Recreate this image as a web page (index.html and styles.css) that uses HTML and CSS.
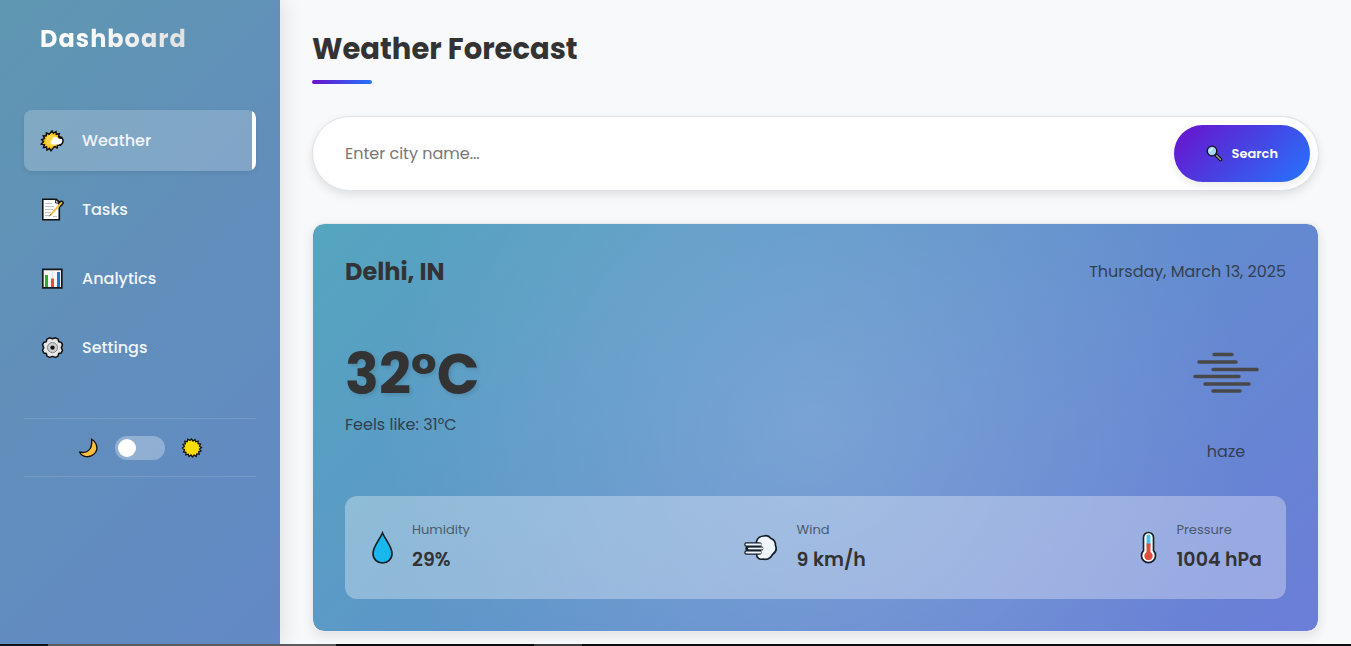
FILE: index.html
```html
<!DOCTYPE html>
<html lang="en">
<head>
<meta charset="utf-8">
<meta name="viewport" content="width=device-width, initial-scale=1">
<title>Dashboard</title>
<link rel="stylesheet" href="styles.css">
</head>
<body>
<div class="app">
  <aside class="sidebar">
    <h2 class="brand">Dashboard</h2>
    <nav class="nav">
      <a class="nav-item active" href="#weather">
        <svg class="nav-icon" viewBox="0 0 26 26" aria-hidden="true">
          <path d="M12 3l1.500 2.300 2.500-1.800.3 2.800 3-.6-.7 2.800 3 .9-2 2 2.200 2.200-2.700 1 1.200 2.800-2.800-.4-.4 3-2.600-1.600L11 22.800l-1.500-2.500L7 22l-.5-3-3 .6.900-2.900-3-.7 2.200-2.200L1.800 11.500l2.700-1-1.200-2.700 2.900.2.200-3 2.700 1.300z" fill="#ffc400" stroke="#111" stroke-width="1.500"/>
          <circle cx="11.500" cy="12.500" r="6" fill="#ffd84a"/>
          <path d="M13 16.500c-2.600 0-3-3.600-.8-4.200.3-3.600 4.800-4.300 6.200-1.500 2.500-.7 4.800.7 4.200 2.900-.2 1.600-1.400 2.600-3 2.800z" fill="#fff"/>
          <path d="M18.500 9.800c3.200-.7 5.200 1.200 4.500 3.900-.4 1.900-1.900 3.100-3.800 3.500" fill="none" stroke="#111" stroke-width="1.500"/>
        </svg>
        <span>Weather</span>
      </a>
      <a class="nav-item" href="#tasks">
        <svg class="nav-icon" viewBox="0 0 26 26" aria-hidden="true">
          <path d="M2.800 2.200h13.500l3 3v17.500H2.800z" fill="#fff" stroke="#111" stroke-width="1.600"/>
          <path d="M15.500 2.500v3.500h4z" fill="#ddd" stroke="#111" stroke-width=".8"/>
          <path d="M5 6.500h7M5 9.500h9M5 12.500h8M5 15.500h6M5 18.500h4M13 19.500h4" stroke="#c4c4c4"/>
          <path d="M10 18.500L20.500 7" stroke="#f2c44d" stroke-width="2"/>
          <path d="M9.300 19.300l1.500-2" stroke="#555"/>
          <path d="M18 7l2.500-2.500q2.700-.8 2.700 1.800l-3 3.500" fill="#f2c44d" stroke="#111" stroke-width="1.500"/>
        </svg>
        <span>Tasks</span>
      </a>
      <a class="nav-item" href="#analytics">
        <svg class="nav-icon" viewBox="0 0 26 26" aria-hidden="true">
          <path d="M2.800 3.300h19v18.500h-19z" fill="#f7f7f7" stroke="#15181d" stroke-width="1.700"/>
          <path d="M12.500 5v8" stroke="#e3e3e3"/>
          <path d="M6.500 9v12" stroke="#31a92c" stroke-width="3"/>
          <path d="M12.500 12.500v8.500" stroke="#e84a34" stroke-width="3"/>
          <path d="M18.500 6v15" stroke="#1879ce" stroke-width="3"/>
        </svg>
        <span>Analytics</span>
      </a>
      <a class="nav-item" href="#settings">
        <svg class="nav-icon" viewBox="0 0 26 26" aria-hidden="true">
          <path d="M9.500 2.800l3 1 3-1 2.600 1.300.6 2.600 2.600.7 1.200 2.500-1.200 2.700 1.200 2.700-1.200 2.600-2.600.6-.7 2.600-2.500 1.300-3-1-3 1-2.500-1.300-.7-2.600-2.600-.6-1.200-2.600 1.200-2.700-1.200-2.700 1.200-2.500 2.600-.7.600-2.600z" fill="#e6e6e6" stroke="#111" stroke-width="1.500" stroke-linejoin="round"/>
          <circle cx="12.500" cy="12.600" r="5" fill="#d0d0d0" stroke="#858585"/>
          <circle cx="12.500" cy="12.600" r="2.200" fill="#111"/>
        </svg>
        <span>Settings</span>
      </a>
    </nav>
    <div class="theme">
      <svg class="theme-icon" viewBox="0 0 22 22" aria-hidden="true">
        <path d="M14.500 2c6 4 7.500 11 2 15.500-4.500 3.500-11 3-14-2.500 5 1.200 8.500 0 10.700-3.500 2-3.500 1.800-6.300 1.300-9.500z" fill="#ffc13b" stroke="#151515" stroke-width="1.400" stroke-linejoin="round"/>
      </svg>
      <input class="switch" type="checkbox" role="switch" aria-label="Light theme">
      <svg class="theme-icon" viewBox="0 0 22 22" aria-hidden="true">
        <path d="M10.500 2l1.500 2 2-1.500.7 2.300 2.500-.6-.2 2.500 2.500.3-1.100 2.200 2.100 1.300-2 1.600 1.500 2-2.400.6.600 2.500-2.500-.3-.5 2.500-2.200-1.200-1.500 1.800-1.500-2-2 1.500-.7-2.300-2.500.6.200-2.500-2.500-.3 1.100-2.200L1.500 11l2-1.600-1.500-2 2.400-.6-.6-2.500 2.500.3.500-2.400 2.200 1.200z" fill="#ffdc00" stroke="#151515" stroke-width="1.300"/>
      </svg>
    </div>
  </aside>
  <main class="main">
    <h1 class="title">Weather Forecast</h1>
    <form class="search">
      <input class="search-input" type="text" placeholder="Enter city name..." aria-label="City name">
      <button class="search-button" type="button">
        <svg class="search-icon" viewBox="0 0 17 17" aria-hidden="true">
          <path d="M9.500 9.500l5 5" stroke="#111" stroke-width="3.600" stroke-linecap="round"/>
          <path d="M10.500 10.500l4 4" stroke="#999" stroke-width="1.600" stroke-linecap="round"/>
          <circle cx="6" cy="6" r="4.800" fill="#a5d5ff" stroke="#111" stroke-width="1.300"/>
          <path d="M3.500 6.500l3-3" stroke="#e4f5ff" stroke-width="1.300"/>
        </svg>
        <span>Search</span>
      </button>
    </form>
    <section class="card">
      <header class="card-header">
        <h2 class="city">Delhi, IN</h2>
        <p class="date">Thursday, March 13, 2025</p>
      </header>
      <div class="current">
        <div class="reading">
          <p class="temperature">32°C</p>
          <p class="feels">Feels like: 31°C</p>
        </div>
        <div class="condition">
          <svg class="condition-icon" viewBox="0 0 120 108" aria-hidden="true">
            <path d="M48 34.500h18M33 42h37M47 49.500h44M29 56.500h44M39 64h44M47 71h27" fill="none" stroke="#484848" stroke-width="3.400" stroke-linecap="round"/>
          </svg>
          <p class="condition-name">haze</p>
        </div>
      </div>
      <div class="details">
        <div class="detail">
          <svg class="icon-drop" viewBox="0 0 27 40" aria-hidden="true">
            <path d="M13.500 5C10.500 12 4 18.500 4 25.500c0 5.500 4.300 9.500 9.500 9.500s9.500-4 9.500-9.500C23 18.500 16.500 12 13.500 5z" fill="#18b8ee" stroke="#14212a" stroke-width="1.700"/>
          </svg>
          <div><p class="label">Humidity</p><p class="value">29%</p></div>
        </div>
        <div class="detail">
          <svg class="icon-wind" viewBox="0 0 38 40" aria-hidden="true">
            <path d="M13.500 13.500c1-3.500 4-5.500 7.500-5.500 3-1 5.500.500 7 2.500 3 1 4.500 4 4.500 7 1.500 3.500 0 7-3 9-2 4-6 5.500-9.500 4.500-4 1-6.500-1.500-6.500-5z" fill="#f0f6fb" stroke="#15202b" stroke-width="1.700" stroke-linejoin="round"/>
            <path d="M16.500 16.500H3.500M18 20.500H4.500M16.500 24.500H3.500" stroke="#15202b" stroke-width="4.600" stroke-linecap="round"/>
            <path d="M17.500 16.500H3.500M19 20.500H6M17.500 24.500H3.500" stroke="#f0f6fb" stroke-width="2.200" stroke-linecap="round"/>
            <path d="M5 18.700h13M5 22.400h13" stroke="#15202b" stroke-width="1.200"/>
          </svg>
          <div><p class="label">Wind</p><p class="value">9 km/h</p></div>
        </div>
        <div class="detail">
          <svg class="icon-thermometer" viewBox="0 0 22 40" aria-hidden="true">
            <path d="M5.500 9.500a5 5 0 0 1 10 0v13.200a7 7 0 1 1-10 0z" fill="#fff" stroke="#18202a" stroke-width="1.700"/>
            <path d="M10.500 8.500v9" stroke="#4bc3e8" stroke-width="4" stroke-linecap="round"/>
            <path d="M10.500 15.500v12" stroke="#df4f40" stroke-width="4"/>
            <circle cx="10.500" cy="28" r="4.200" fill="#df4f40"/>
          </svg>
          <div><p class="label">Pressure</p><p class="value">1004 hPa</p></div>
        </div>
      </div>
    </section>
  </main>
</div>
<div class="edge"></div>
</body>
</html>
```
FILE: styles.css
```css
* {
  box-sizing: border-box;
}

body {
  display: flex;
  flex-direction: column;
  min-height: 100vh;
  margin: 0;
  background: #f8f9fb;
  color: #333;
  font-family: Poppins, Inter, "Open Sans", sans-serif;
  font-size: 16px;
  line-height: 24px;
}

h1, h2, p {
  margin: 0;
}

.app {
  display: flex;
  flex: 1;
}

.sidebar {
  flex: 0 0 280px;
  padding: 24px;
  background: linear-gradient(135deg, #5f97b1 0%, #618fba 42%, #6389c6 100%);
  box-shadow: 4px 0 20px rgba(0, 0, 0, 0.1);
}

.brand {
  width: max-content;
  margin: 0 16px 56px;
  background: linear-gradient(90deg, #fff 25%, #e0e0e0);
  background-clip: text;
  color: transparent;
  font-size: 24px;
  font-weight: 700;
  letter-spacing: 1px;
  line-height: 30px;
}

.nav {
  display: flex;
  flex-direction: column;
  gap: 8px;
}

.nav-item {
  display: flex;
  align-items: center;
  gap: 16px;
  height: 61px;
  padding: 0 16px;
  border-radius: 8px;
  color: #f0f5fc;
  font-weight: 500;
  text-decoration: none;
}

.nav-item.active {
  background: linear-gradient(270deg, #fff 4px, rgba(255, 255, 255, 0.2) 4px);
  box-shadow: 0 2px 5px rgba(0, 0, 0, 0.08);
}

.nav-icon {
  width: 26px;
  height: 26px;
}

.theme {
  display: flex;
  align-items: center;
  justify-content: center;
  gap: 16px;
  height: 59px;
  margin-top: 40px;
  border-top: 1px solid rgba(255, 255, 255, 0.12);
  border-bottom: 1px solid rgba(255, 255, 255, 0.12);
}

.theme-icon {
  width: 22px;
  height: 22px;
}

.switch {
  width: 50px;
  height: 24px;
  margin: 0;
  padding: 3px;
  border-radius: 12px;
  background: rgba(255, 255, 255, 0.3);
  appearance: none;
}

.switch::before {
  display: block;
  width: 18px;
  height: 18px;
  border-radius: 50%;
  background: #fff;
  content: "";
}

.switch:checked::before {
  margin-left: auto;
}

.main {
  flex: 1;
  min-width: 0;
  padding: 32px 32px 12px;
}

.title {
  margin-bottom: 32px;
  font-size: 29px;
  font-weight: 700;
  line-height: 34px;
}

.title::after {
  display: block;
  width: 60px;
  height: 4px;
  margin-top: 14px;
  border-radius: 2px;
  background: linear-gradient(90deg, #6a11cb, #2575fc);
  content: "";
}

.search {
  display: flex;
  gap: 16px;
  margin-bottom: 32px;
  padding: 8px;
  border: 1px solid #dfe1e4;
  border-radius: 38px;
  background: #fff;
  box-shadow: 0 4px 10px rgba(0, 0, 0, 0.1);
}

.search-input {
  flex: 1;
  min-width: 0;
  padding: 0 24px;
  border: 0;
  outline: 0;
  background: transparent;
  color: #333;
  font: inherit;
}

.search-input::placeholder {
  color: #777;
}

.search-button {
  display: flex;
  align-items: center;
  gap: 9px;
  height: 57px;
  padding: 0 32px;
  border: 0;
  border-radius: 29px;
  background: linear-gradient(135deg, #6a11cb, #2575fc);
  box-shadow: 0 4px 10px rgba(0, 0, 0, 0.08);
  color: #fff;
  font: inherit;
  font-size: 13px;
  font-weight: 600;
}

.search-icon {
  width: 17px;
  height: 17px;
}

.card {
  padding: 32px;
  border: 1px solid #e6e9ee;
  border-radius: 12px;
  background:
    radial-gradient(circle at 50% 50%, rgba(255, 255, 255, 0.16), transparent 80%) padding-box,
    linear-gradient(135deg, #55a5bf, #6b7dd8) padding-box;
  box-shadow: 0 4px 12px rgba(0, 0, 0, 0.1);
}

.card-header {
  display: flex;
  align-items: center;
  justify-content: space-between;
  margin-bottom: 32px;
}

.city {
  font-size: 24px;
  font-weight: 700;
  line-height: 32px;
}

.date,
.feels,
.condition-name {
  color: #334050;
}

.current {
  display: flex;
  align-items: flex-start;
  justify-content: space-between;
  margin-bottom: 32px;
}

.reading {
  padding-top: 21px;
}

.temperature {
  margin-bottom: 4px;
  font-size: 56px;
  font-weight: 700;
  line-height: 68px;
  text-shadow: 2px 2px 4px rgba(0, 0, 0, 0.12);
}

.condition {
  display: flex;
  flex-direction: column;
  align-items: center;
  gap: 12px;
}

.condition-icon {
  width: 120px;
  height: 108px;
}

.details {
  display: flex;
  justify-content: space-between;
  padding: 24px;
  border-radius: 12px;
  background: rgba(255, 255, 255, 0.32);
}

.detail {
  display: flex;
  align-items: center;
  gap: 16px;
}

.icon-drop {
  width: 27px;
  height: 40px;
}

.icon-wind {
  width: 38px;
  height: 40px;
}

.icon-thermometer {
  width: 22px;
  height: 40px;
}

.label {
  margin-bottom: 4px;
  color: #4b596d;
  font-size: 13px;
  line-height: 20px;
}

.value {
  font-size: 19px;
  font-weight: 600;
  line-height: 31px;
}

.edge {
  height: 2px;
  background: linear-gradient(90deg, #10131a 48px, #5c5c5c 48px 336px, #0c0d10 336px 534px, #3a3a3a 534px 582px, #0c0d10 582px);
}
```
